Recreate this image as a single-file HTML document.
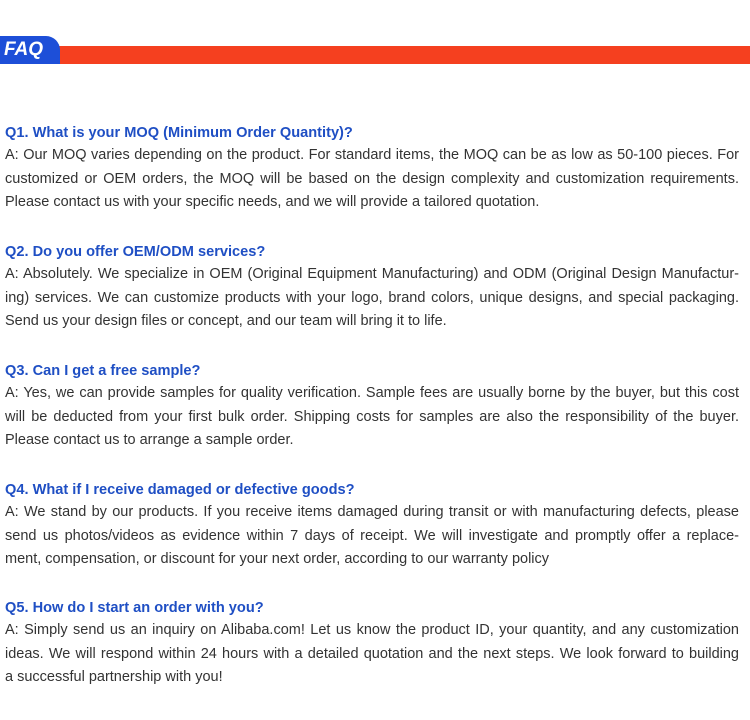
<!DOCTYPE html>
<html><head><meta charset="utf-8"><style>
body{margin:0;width:750px;height:720px;background:#fff;font-family:"Liberation Sans",sans-serif;position:relative;overflow:hidden}
.tab{position:absolute;left:0;top:36px;width:60px;height:28px;background:#1d4fd8;border-top-right-radius:14px;z-index:2}
.tab span{position:absolute;left:4px;top:3px;color:#fff;font-weight:bold;font-style:italic;font-size:19px}
.bar{position:absolute;left:56px;top:46px;width:694px;height:18px;background:#f5401f}
.blk{position:absolute;left:5px;width:734px}
.q{color:#1f4fc4;font-weight:bold;font-size:14.6px;height:22px;line-height:22px}
.a{color:#333;font-size:14.5px;line-height:23.6px}
.a div{white-space:nowrap}
.j{text-align:justify;text-align-last:justify}
</style></head><body>
<div class="tab"><span>FAQ</span></div><div class="bar"></div>

<div class="blk" style="top:122px">
<div class="q">Q1. What is your MOQ (Minimum Order Quantity)?</div>
<div class="a"><div class="j">A: Our MOQ varies depending on the product. For standard items, the MOQ can be as low as 50-100 pieces. For</div><div class="j">customized or OEM orders, the MOQ will be based on the design complexity and customization requirements.</div><div>Please contact us with your specific needs, and we will provide a tailored quotation.</div></div>
</div>

<div class="blk" style="top:241px">
<div class="q">Q2. Do you offer OEM/ODM services?</div>
<div class="a"><div class="j">A: Absolutely. We specialize in OEM (Original Equipment Manufacturing) and ODM (Original Design Manufactur-</div><div class="j">ing) services. We can customize products with your logo, brand colors, unique designs, and special packaging.</div><div>Send us your design files or concept, and our team will bring it to life.</div></div>
</div>

<div class="blk" style="top:360px">
<div class="q">Q3. Can I get a free sample?</div>
<div class="a"><div class="j">A: Yes, we can provide samples for quality verification. Sample fees are usually borne by the buyer, but this cost</div><div class="j">will be deducted from your first bulk order. Shipping costs for samples are also the responsibility of the buyer.</div><div>Please contact us to arrange a sample order.</div></div>
</div>

<div class="blk" style="top:479px">
<div class="q">Q4. What if I receive damaged or defective goods?</div>
<div class="a"><div class="j">A: We stand by our products. If you receive items damaged during transit or with manufacturing defects, please</div><div class="j">send us photos/videos as evidence within 7 days of receipt. We will investigate and promptly offer a replace-</div><div>ment, compensation, or discount for your next order, according to our warranty policy</div></div>
</div>

<div class="blk" style="top:597px">
<div class="q">Q5. How do I start an order with you?</div>
<div class="a"><div class="j">A: Simply send us an inquiry on Alibaba.com! Let us know the product ID, your quantity, and any customization</div><div class="j">ideas. We will respond within 24 hours with a detailed quotation and the next steps. We look forward to building</div><div>a successful partnership with you!</div></div>
</div>
</body></html>
